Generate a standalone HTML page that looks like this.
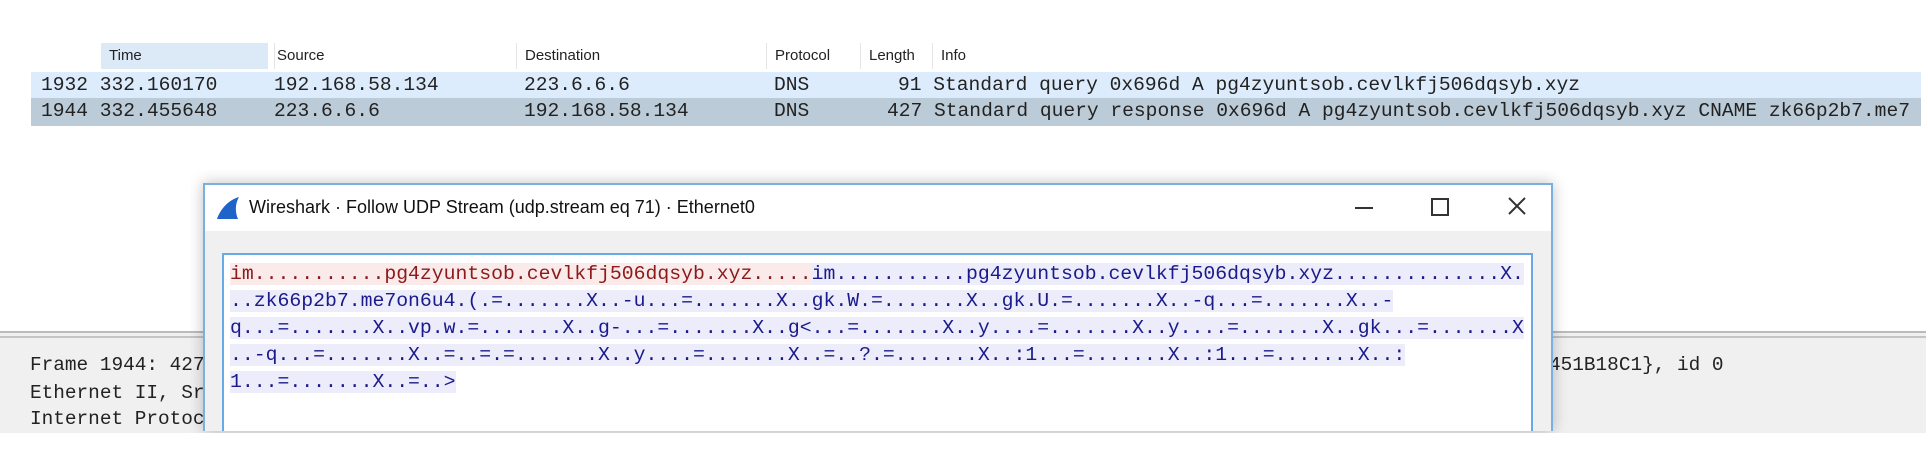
<!DOCTYPE html>
<html><head><style>
body{margin:0;width:1928px;height:474px;background:#fff;position:relative;overflow:hidden;font-family:"Liberation Sans",sans-serif}
.mono{font-family:"Liberation Mono",monospace}
.hdr{position:absolute;top:43px;height:26px;font-size:15px;line-height:26px;color:#222}
.row{position:absolute;left:31px;width:1890px;height:26px;font-size:19.6px;line-height:26px;color:#222;white-space:pre}
.c{position:absolute;top:0}
.pane{position:absolute;left:0;top:331px;width:1926px;height:100px;background:#f0f0f0;border-top:2px solid #bbb}
.pane2{position:absolute;left:0;top:336px;width:1926px;height:2px;background:#c4c4c4}
.bt{position:absolute;left:30px;font-size:19.4px;color:#222;white-space:pre}
.clip{position:absolute;left:190px;top:170px;width:1380px;height:263px;overflow:hidden}
.dlg{position:absolute;left:13px;top:13px;width:1346px;height:246px;background:#f0f0f0;border:2px solid #7ab0e0;border-bottom:none;box-shadow:0 0 14px rgba(0,0,0,.25);overflow:hidden}
.tb{position:absolute;left:0;top:0;width:1346px;height:46px;background:#fff}
.ta{position:absolute;left:17px;top:68px;width:1307px;height:200px;background:#fff;border:2px solid #69a9e6}
.txt{position:absolute;left:6px;top:6px;font-size:19.8px;line-height:27px;white-space:pre;color:#1a1a8c}
.b{background:#ececfa}
.r{background:#fbeaea;color:#8c1a1a}
</style></head><body>
<div class="hdr" style="left:101px;width:167px;background:#dceaf8"></div>
<div class="hdr" style="left:109px">Time</div>
<div class="hdr" style="left:274px;border-left:1px solid #e4e4e4;padding-left:2px">Source</div>
<div class="hdr" style="left:516px;border-left:1px solid #e4e4e4;padding-left:8px">Destination</div>
<div class="hdr" style="left:766px;border-left:1px solid #e4e4e4;padding-left:8px">Protocol</div>
<div class="hdr" style="left:860px;border-left:1px solid #e4e4e4;padding-left:8px">Length</div>
<div class="hdr" style="left:932px;border-left:1px solid #e4e4e4;padding-left:8px">Info</div>
<div class="row mono" style="top:72px;background:#dcecfc"><span class="c" style="left:10px">1932 332.160170</span><span class="c" style="left:243px">192.168.58.134</span><span class="c" style="left:493px">223.6.6.6</span><span class="c" style="left:743px">DNS</span><span class="c" style="left:867px">91 Standard query 0x696d A pg4zyuntsob.cevlkfj506dqsyb.xyz</span></div>
<div class="row mono" style="top:98px;background:#bccbd8;height:28px"><span class="c" style="left:10px">1944 332.455648</span><span class="c" style="left:243px">223.6.6.6</span><span class="c" style="left:493px">192.168.58.134</span><span class="c" style="left:743px">DNS</span><span class="c" style="left:856px">427 Standard query response 0x696d A pg4zyuntsob.cevlkfj506dqsyb.xyz CNAME zk66p2b7.me7</span></div>
<div class="pane"></div><div class="pane2"></div>
<div class="bt mono" style="top:354px">Frame 1944: 427</div>
<div class="bt mono" style="top:382px">Ethernet II, Sr</div>
<div class="bt mono" style="top:408px">Internet Protoc</div>
<div class="bt mono" style="top:354px;left:1549px">451B18C1}, id 0</div>
<div class="clip"><div class="dlg">
<div class="tb">
<svg style="position:absolute;left:11px;top:11px" width="26" height="24" viewBox="0 0 26 24"><path d="M1 23 C4 14 12 4 23 1 C19 8 19 16 22 23 Z" fill="#1f64c8"/></svg>
<div style="position:absolute;left:44px;top:12px;font-size:18px;color:#111">Wireshark · Follow UDP Stream (udp.stream eq 71) · Ethernet0</div>
<div style="position:absolute;left:1150px;top:22px;width:18px;height:2px;background:#333"></div>
<div style="position:absolute;left:1226px;top:13px;width:14px;height:14px;border:2px solid #333"></div>
<svg style="position:absolute;left:1303px;top:12px" width="18" height="18"><path d="M1 1L17 17M17 1L1 17" stroke="#333" stroke-width="2"/></svg>
</div>
<div class="ta"><div class="txt mono"><span class="r">im...........pg4zyuntsob.cevlkfj506dqsyb.xyz.....</span><span class="b">im...........pg4zyuntsob.cevlkfj506dqsyb.xyz..............X.</span>
<span class="b">..zk66p2b7.me7on6u4.(.=.......X..-u...=.......X..gk.W.=.......X..gk.U.=.......X..-q...=.......X..-</span>
<span class="b">q...=.......X..vp.w.=.......X..g-...=.......X..g&lt;...=.......X..y....=.......X..y....=.......X..gk...=.......X</span>
<span class="b">..-q...=.......X..=..=.=.......X..y....=.......X..=..?.=.......X..:1...=.......X..:1...=.......X..:</span>
<span class="b">1...=.......X..=..&gt;</span></div></div>
</div></div>
</body></html>
